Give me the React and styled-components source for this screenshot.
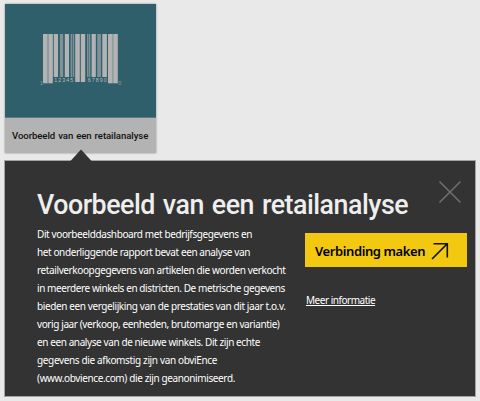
import React from 'react';
import styled, { createGlobalStyle } from 'styled-components';

const GlobalStyle = createGlobalStyle`
  * { box-sizing: border-box; }
  body { margin: 0; background: #e9e9e9; }
`;

const Page = styled.main`
  width: 480px;
  height: 401px;
  padding: 4px 5px;
  display: flex;
  flex-direction: column;
  gap: 8px;
  overflow: hidden;
  background: #e9e9e9;
  font-family: 'Noto Sans', sans-serif;
`;

const Card = styled.article`
  width: 151px;
  height: 149px;
  flex: none;
  display: flex;
  flex-direction: column;
  background: #b3b3b3;
  box-shadow: 0 0 2px rgba(0, 0, 0, 0.4);
`;

const Cover = styled.div`
  height: 114px;
  background: #2f5f6a;
  border-bottom: 1px solid #5d7b82;
`;

const CardLabel = styled.div`
  flex: 1;
  padding-left: 7px;
  display: flex;
  align-items: center;
  font: 500 9.6px Roboto, sans-serif;
  letter-spacing: -0.07px;
  word-spacing: 0.7px;
  white-space: nowrap;
  color: #111;
`;

const Panel = styled.section`
  position: relative;
  width: 470px;
  height: 235px;
  flex: none;
  padding: 26px 8px 0 32px;
  background: #333;
  box-shadow: 0 0 0 1px #a3a3a3;
`;

const Pointer = styled.svg`
  position: absolute;
  left: 65px;
  top: -12px;
  width: 22px;
  height: 13px;
`;

const Header = styled.header`
  height: 40px;
  display: flex;
  justify-content: space-between;
`;

const Title = styled.h1`
  margin: 0;
  font: 500 26.8px/37px Roboto, sans-serif;
  letter-spacing: -0.49px;
  word-spacing: 1.8px;
  white-space: nowrap;
  color: #eee;
`;

const CloseButton = styled.button`
  width: 24px;
  height: 24px;
  margin: -7px 5px 0 0;
  padding: 0;
  border: 0;
  background: none;
`;

const Content = styled.div`
  display: grid;
  grid-template-columns: 268px 162px;
`;

const Description = styled.p`
  margin: -2px 0 0;
`;

const Line = styled.span`
  display: block;
  font-size: 10px;
  line-height: 18px;
  letter-spacing: ${(p) => p.$spacing}px;
  white-space: nowrap;
  color: #fff;
`;

const Actions = styled.div`
  display: flex;
  flex-direction: column;
  align-items: flex-start;
  padding-top: 6px;
`;

const ConnectButton = styled.button`
  width: 162px;
  height: 34px;
  padding: 1px 18px 0 10px;
  border: 0;
  display: flex;
  align-items: center;
  justify-content: space-between;
  background: #f2c811;
  font: 600 13px 'Noto Sans', sans-serif;
  letter-spacing: -0.4px;
  white-space: nowrap;
  color: #000;
`;

const MoreLink = styled.a`
  margin: 24px 0 0 1px;
  font-size: 10px;
  line-height: 18px;
  letter-spacing: -0.48px;
  white-space: nowrap;
  color: #fff;
  text-decoration: underline;
`;

const bars = [
  [43, 4.3, 83.3], [48.7, 4.1, 83.3], [54, 4, 77], [64.8, 4.2, 77],
  [75.2, 4.6, 82], [80.8, 4.4, 82], [91.6, 4.2, 77], [102.3, 4.6, 77],
  [108, 4.5, 83.3], [113.2, 4.6, 83.3],
];
const dimBars = [
  [47, 2, 83.3], [52.5, 0.9, 77], [59.8, 3.4, 77], [70.6, 1.5, 77], [72.7, 1.5, 77], [87, 1.4, 77],
  [88.8, 1.5, 77], [97.2, 3.8, 77], [112.2, 1, 83.3],
];

const Digits = styled.text`
  font: 5.4px 'Liberation Sans', sans-serif;
  fill: #b8bcbd;
`;

function Barcode() {
  return (
    <svg width="151" height="113" viewBox="5 4 151 113" aria-hidden="true">
      {dimBars.map(([x, w, end]) => (
        <rect key={x} x={x} y="34" width={w} height={end - 34} fill="#7c9297" />
      ))}
      {bars.map(([x, w, end]) => (
        <rect key={x} x={x} y="34" width={w} height={end - 34} fill="#b3b3b3" />
      ))}
      <Digits x="40" y="85.3" opacity="0.7">1</Digits>
      <Digits x="54.2" y="82" textLength="19">12345</Digits>
      <Digits x="87.8" y="82" textLength="19">67890</Digits>
      <Digits x="118.3" y="85.3" opacity="0.7">0</Digits>
    </svg>
  );
}

const description = [
  ['Dit voorbeelddashboard met bedrijfsgegevens en', -0.39],
  ['het onderliggende rapport bevat een analyse van', -0.396],
  ['retailverkoopgegevens van artikelen die worden verkocht', -0.385],
  ['in meerdere winkels en districten. De metrische gegevens', -0.414],
  ['bieden een vergelijking van de prestaties van dit jaar t.o.v.', -0.39],
  ['vorig jaar (verkoop, eenheden, brutomarge en variantie)', -0.397],
  ['en een analyse van de nieuwe winkels. Dit zijn echte', -0.404],
  ['gegevens die afkomstig zijn van obviEnce', -0.353],
  ['(www.obvience.com) die zijn geanonimiseerd.', -0.373],
];

export default function App() {
  return (
    <>
      <GlobalStyle />
      <Page>
        <Card>
          <Cover><Barcode /></Cover>
          <CardLabel>Voorbeeld van een retailanalyse</CardLabel>
        </Card>
        <Panel>
          <Pointer viewBox="0 0 22 13"><path d="M0 12.5 11 0.5 22 12.5z" fill="#333" /></Pointer>
          <Header>
            <Title>Voorbeeld van een retailanalyse</Title>
            <CloseButton aria-label="Sluiten">
              <svg width="24" height="24" viewBox="0 0 24 24" display="block">
                <path d="M1.5 1.5 22.5 22.5M22.5 1.5 1.5 22.5" stroke="#707070" strokeWidth="1.5" />
              </svg>
            </CloseButton>
          </Header>
          <Content>
            <Description>
              {description.map(([text, spacing]) => (
                <Line key={text} $spacing={spacing}>{text}</Line>
              ))}
            </Description>
            <Actions>
              <ConnectButton>
                Verbinding maken
                <svg width="18" height="18" viewBox="0 0 18 18" fill="none" stroke="#111" strokeWidth="1.6">
                  <path d="M1 17 16 2M2.5 1.8H16.3V15.5" />
                </svg>
              </ConnectButton>
              <MoreLink>Meer informatie</MoreLink>
            </Actions>
          </Content>
        </Panel>
      </Page>
    </>
  );
}
